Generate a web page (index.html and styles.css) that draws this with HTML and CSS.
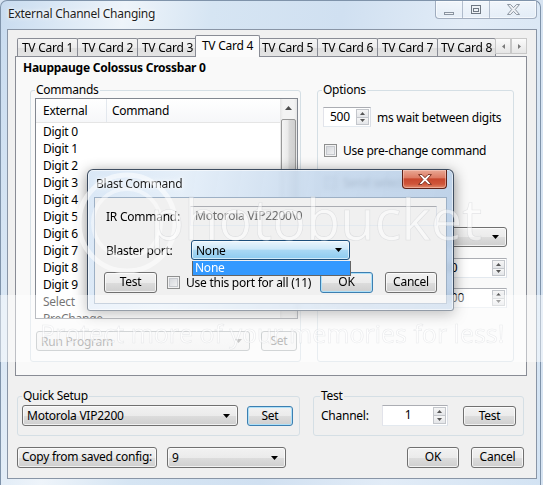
FILE: index.html
```html
<!DOCTYPE html>
<html>
<head>
<meta charset="utf-8">
<title>External Channel Changing</title>
<link rel="stylesheet" href="styles.css">
</head>
<body>
<div class="window">
  <div class="titlebar">
    <span class="title">External Channel Changing</span>
    <div class="capbtns">
      <span class="cap cap-min"><svg width="12" height="12" viewBox="0 0 12 12"><rect x="1.5" y="8.5" width="9" height="2" fill="#eef2f6" stroke="#8a94a0"/></svg></span>
      <span class="cap cap-max"><svg width="12" height="12" viewBox="0 0 12 12"><rect x="1.5" y="1.5" width="9" height="8" fill="#eef2f6" stroke="#6f7883"/><rect x="3.5" y="4.5" width="5" height="3" fill="none" stroke="#6f7883"/></svg></span>
      <span class="cap cap-close"><svg width="13" height="11" viewBox="0 0 13 11"><polygon points="0.5,0.5 3.5,0.5 6.5,3.6 9.5,0.5 12.5,0.5 8.3,5.5 12.5,10.5 9.5,10.5 6.5,7.4 3.5,10.5 0.5,10.5 4.7,5.5" fill="#eef1f5" stroke="#838d99" stroke-width="0.9"/></svg></span>
    </div>
  </div>

  <div class="client">
    <div class="tabctl">
      <div class="tabstrip">
        <span class="tab">TV Card 1</span>
        <span class="tab">TV Card 2</span>
        <span class="tab">TV Card 3</span>
        <span class="tab sel">TV Card 4</span>
        <span class="tab">TV Card 5</span>
        <span class="tab">TV Card 6</span>
        <span class="tab">TV Card 7</span>
        <span class="tab last">TV Card 8</span>
        <span class="tabscroll">
          <span class="tsb"><svg width="3" height="5" viewBox="0 0 3 5"><path d="M3 0v5L0 2.5z" fill="#7a7a7a"/></svg></span>
          <span class="tsb"><svg width="3" height="5" viewBox="0 0 3 5"><path d="M0 0v5l3-2.5z" fill="#7a7a7a"/></svg></span>
        </span>
      </div>
      <div class="tabpage">
        <div class="devname">Hauppauge Colossus Crossbar 0</div>
        <div class="cols">
          <fieldset class="group g-commands">
            <legend>Commands</legend>
            <div class="listview">
              <div class="lv-main">
                <div class="lv-header"><span class="col1">External</span><span class="col2">Command</span></div>
                <div class="lv-rows">
                  <div class="lv-row">Digit 0</div>
                  <div class="lv-row">Digit 1</div>
                  <div class="lv-row">Digit 2</div>
                  <div class="lv-row">Digit 3</div>
                  <div class="lv-row">Digit 4</div>
                  <div class="lv-row">Digit 5</div>
                  <div class="lv-row">Digit 6</div>
                  <div class="lv-row">Digit 7</div>
                  <div class="lv-row">Digit 8</div>
                  <div class="lv-row">Digit 9</div>
                  <div class="lv-row">Select</div>
                  <div class="lv-row">PreChange</div>
                </div>
              </div>
              <div class="vscroll">
                <span class="vs-up"><svg width="7" height="4" viewBox="0 0 7 4"><path d="M0 4h7L3.5 0z" fill="#4d4d4d"/></svg></span>
                <span class="vs-thumb"></span>
              </div>
            </div>
            <div class="cmd-row">
              <div class="combo disabled w-run"><span>Run Program</span><svg width="7" height="4" viewBox="0 0 7 4"><path d="M0 0h7L3.5 4z" fill="#9a9a9a"/></svg></div>
              <div class="btn disabled w-set">Set</div>
            </div>
          </fieldset>

          <fieldset class="group g-options">
            <legend>Options</legend>
            <div class="opt-spin-row">
              <div class="spin w-500">
                <span class="spin-val">500</span>
                <span class="spin-btns">
                  <span class="sb"><svg width="5" height="3" viewBox="0 0 5 3"><path d="M0 3h5L2.5 0z" fill="#555"/></svg></span>
                  <span class="sb"><svg width="5" height="3" viewBox="0 0 5 3"><path d="M0 0h5L2.5 3z" fill="#555"/></svg></span>
                </span>
              </div>
              <span class="opt-label">ms wait between digits</span>
            </div>
            <div class="opt-check-row">
              <span class="chk"></span><span class="chk-label">Use pre-change command</span>
            </div>
            <div class="opt-check-row row-2">
              <span class="chk"></span><span class="chk-label">Send select</span>
            </div>
            <div class="opt-ctl-row r-combo">
              <span>Blaster:</span>
              <div class="combo w-opt"><span>None</span><svg width="7" height="4" viewBox="0 0 7 4"><path d="M0 0h7L3.5 4z" fill="#000"/></svg></div>
            </div>
            <div class="opt-ctl-row r-spin1">
              <span>Pause:</span>
              <div class="spin w-opt2">
                <span class="spin-val">1000</span>
                <span class="spin-btns">
                  <span class="sb"><svg width="5" height="3" viewBox="0 0 5 3"><path d="M0 3h5L2.5 0z" fill="#555"/></svg></span>
                  <span class="sb"><svg width="5" height="3" viewBox="0 0 5 3"><path d="M0 0h5L2.5 3z" fill="#555"/></svg></span>
                </span>
              </div>
            </div>
            <div class="opt-ctl-row r-spin2">
              <span>Timeout:</span>
              <div class="spin w-opt2">
                <span class="spin-val">10000</span>
                <span class="spin-btns">
                  <span class="sb"><svg width="5" height="3" viewBox="0 0 5 3"><path d="M0 3h5L2.5 0z" fill="#555"/></svg></span>
                  <span class="sb"><svg width="5" height="3" viewBox="0 0 5 3"><path d="M0 0h5L2.5 3z" fill="#555"/></svg></span>
                </span>
              </div>
            </div>
          </fieldset>
        </div>
      </div>
    </div>

    <div class="row2">
      <fieldset class="group g-quick">
        <legend>Quick Setup</legend>
        <div class="qs-row">
          <div class="combo w-qs"><span>Motorola VIP2200</span><svg width="7" height="4" viewBox="0 0 7 4"><path d="M0 0h7L3.5 4z" fill="#000"/></svg></div>
          <div class="btn default w-qset">Set</div>
        </div>
      </fieldset>
      <fieldset class="group g-test">
        <legend>Test</legend>
        <div class="test-row">
          <span class="ch-label">Channel:</span>
          <div class="spin w-ch">
            <span class="spin-val center">1</span>
            <span class="spin-btns">
              <span class="sb"><svg width="5" height="3" viewBox="0 0 5 3"><path d="M0 3h5L2.5 0z" fill="#555"/></svg></span>
              <span class="sb"><svg width="5" height="3" viewBox="0 0 5 3"><path d="M0 0h5L2.5 3z" fill="#555"/></svg></span>
            </span>
          </div>
          <div class="btn w-test">Test</div>
        </div>
      </fieldset>
    </div>

    <div class="row3">
      <div class="btn w-copy">Copy from saved config:</div>
      <div class="combo w-nine"><span>9</span><svg width="7" height="4" viewBox="0 0 7 4"><path d="M0 0h7L3.5 4z" fill="#000"/></svg></div>
      <div class="btn w-ok">OK</div>
      <div class="btn w-cancel">Cancel</div>
    </div>
  </div>

  <div class="dialog">
    <div class="dlg-title">Blast Command</div>
    <span class="dlg-close"><svg width="14" height="11" viewBox="0 0 14 11"><polygon points="0.6,0.6 4,0.6 7,3.7 10,0.6 13.4,0.6 9,5.5 13.4,10.4 10,10.4 7,7.3 4,10.4 0.6,10.4 5,5.5" fill="#fff" stroke="#6e2214" stroke-width="0.9"/></svg></span>
    <div class="dlg-client">
      <div class="dlg-row">
        <span class="dlg-label">IR Command:</span>
        <div class="textbox ro w-ir">Motorola VIP2200\0</div>
      </div>
      <div class="dlg-row r2">
        <span class="dlg-label l2">Blaster port:</span>
        <div class="combo focus w-port"><span>None</span><svg width="7" height="4" viewBox="0 0 7 4"><path d="M0 0h7L3.5 4z" fill="#000"/></svg></div>
      </div>
      <div class="dlg-row3">
        <div class="btn w-dtest">Test</div>
        <span class="chk dchk"></span>
        <span class="chk-label">Use this port for all (11)</span>
        <div class="btn default w-dok">OK</div>
        <div class="btn w-dcancel">Cancel</div>
      </div>
    </div>
    <div class="droplist"><span>None</span></div>
  </div>

  <div class="band"></div>

  <div class="watermark">
    <svg class="wm-logo" width="110" height="110" viewBox="0 0 110 110"><circle cx="55" cy="55" r="48" fill="none" stroke="rgba(255,255,255,0.55)" stroke-width="5"/><circle cx="55" cy="55" r="34" fill="none" stroke="rgba(255,255,255,0.45)" stroke-width="4"/></svg>
    <span class="wm-name">photobucket</span>
    <span class="wm-tag">Protect more of your memories for less!</span>
  </div>
</div>
</body>
</html>
```

FILE: styles.css
```css
* { box-sizing: border-box; }
html, body { margin: 0; padding: 0; }
body {
  width: 543px; height: 485px; overflow: hidden;
  background: #d7e4f2;
  font-family: "Noto Sans", "DejaVu Sans", sans-serif;
  font-size: 12px; letter-spacing: -0.25px; color: #000;
}

/* ---------- main window ---------- */
.window {
  position: relative;
  width: 541px; height: 485px;
  border: 1px solid #7f93aa; border-bottom: none;
  border-radius: 7px 7px 0 0;
  padding: 0 3px 0 6px;
  background: linear-gradient(100deg, #c8dbef 0%, #dbe8f5 10%, #eef4fa 20%, #d6e5f3 34%, #d0e0f1 55%, #e2ecf7 75%, #d3e3f3 100%);
}
.titlebar { height: 28px; display: flex; align-items: flex-start; }
.title { padding: 5px 0 0 1px; line-height: 16px; color: #1f1f1f; text-shadow: 0 0 6px #fff, 0 0 3px #fff; }
.capbtns {
  margin-left: auto; display: flex; height: 18px;
  border: 1px solid rgba(70, 90, 120, 0.45); border-top: none;
  border-radius: 0 0 4px 4px; overflow: hidden;
  background: linear-gradient(rgba(255,255,255,0.55), rgba(255,255,255,0.2));
  box-shadow: inset 0 0 0 1px rgba(255,255,255,0.55);
}
.cap { display: flex; align-items: center; justify-content: center; height: 100%; }
.cap-min { width: 26px; }
.cap-max { width: 27px; border-left: 1px solid rgba(70, 90, 120, 0.35); }
.cap-close { width: 47px; border-left: 1px solid rgba(70, 90, 120, 0.35); }

.client {
  width: 530px; height: 450px;
  background: #f0f0f0;
  border: 1px solid #8995a6;
}

/* ---------- tabs ---------- */
.tabctl { margin: 5px 0 0 7px; width: 512px; }
.tabstrip { height: 21px; display: flex; align-items: flex-end; padding-left: 2px; position: relative; z-index: 1; }
.tab {
  width: 61px; height: 18px; margin-right: -1px;
  border: 1px solid #898c95; border-bottom: none; border-radius: 2px 2px 0 0;
  background: linear-gradient(#f4f4f4 0%, #ececec 50%, #dfdfdf 51%, #e4e4e4 100%);
  text-align: center; line-height: 17px; white-space: nowrap;
}
.tab.sel {
  width: 65px; height: 22px; margin: 0 -3px -1px -2px;
  background: #fbfbfb; position: relative; z-index: 2; line-height: 19px;
}
.tab.last { width: 59px; overflow: hidden; }
.tabscroll { display: flex; margin-bottom: 2px; }
.tsb {
  width: 16px; height: 16px; border: 1px solid #c8c8c8;
  background: linear-gradient(#fbfbfb, #e6e6e6);
  display: flex; align-items: center; justify-content: center;
}
.tabpage {
  height: 320px; border: 1px solid #898c95; background: #f9f9f9;
  padding: 3px 0 0 7px;
}
.devname { font-weight: bold; line-height: 15px; }
.cols { display: flex; margin-top: 8px; }

/* ---------- group boxes ---------- */
.group {
  margin: 0; padding: 0; min-width: 0;
  border: 1px solid #d5dfe5; border-radius: 3px;
}
.group legend { padding: 0 1px; margin-left: 4px; line-height: 14px; font-size: 12px; }
.g-commands { margin-left: 7px; width: 271px; height: 279px; }
.g-options { margin-left: 16px; width: 197px; height: 279px; }

/* ---------- list view ---------- */
.listview {
  margin: 1px 0 0 4px; width: 263px; height: 221px;
  border: 1px solid #828790; background: #fff; display: flex; overflow: hidden;
}
.lv-main { flex: 1; overflow: hidden; }
.lv-header {
  height: 24px; display: flex; border-bottom: 1px solid #e5e5e5;
  background: linear-gradient(#ffffff, #f6f7f9);
}
.col1 { width: 71px; padding-left: 7px; line-height: 23px; border-right: 1px solid #e3e8ee; }
.col2 { padding-left: 5px; line-height: 23px; }
.lv-row { height: 17px; line-height: 17px; padding-left: 7px; }
.vscroll {
  width: 17px;
  background: linear-gradient(90deg, #e6e6e6, #f3f3f3 18%, #f3f3f3 82%, #e6e6e6);
  display: flex; flex-direction: column; align-items: center;
}
.vs-up { height: 17px; display: flex; align-items: center; justify-content: center; }
.vs-thumb {
  width: 15px; height: 150px; margin-top: 3px;
  border: 1px solid #979797; border-radius: 2px;
  background: linear-gradient(90deg, #f4f4f4, #e9e9e9 45%, #d9d9d9 55%, #cfcfcf);
}

.cmd-row { display: flex; margin: 12px 0 0 5px; }
.w-run { width: 214px; }
.w-set { width: 36px; margin-left: 11px; }

/* ---------- controls ---------- */
.btn {
  height: 20px; border: 1px solid #707070; border-radius: 3px;
  background: linear-gradient(#f2f2f2 0%, #ebebeb 50%, #dddddd 51%, #cfcfcf 100%);
  box-shadow: inset 0 0 0 1px rgba(255,255,255,0.7);
  text-align: center; line-height: 18px; white-space: nowrap;
}
.btn.default { border-color: #3c7fb1; box-shadow: inset 0 0 0 1px #aee0f8; }
.btn.disabled { border-color: #adb2b5; background: #f4f4f4; color: #838383; box-shadow: none; }

.combo {
  height: 20px; border: 1px solid #707070; border-radius: 3px;
  background: linear-gradient(#f2f2f2 0%, #ebebeb 50%, #dddddd 51%, #cfcfcf 100%);
  box-shadow: inset 0 0 0 1px rgba(255,255,255,0.7);
  display: flex; align-items: center; justify-content: space-between;
  padding: 0 7px 0 4px; white-space: nowrap;
}
.combo.disabled {
  border-color: #adb2b5; color: #838383; box-shadow: none;
  background: linear-gradient(#f6f6f6, #efefef);
}
.combo.focus {
  border-color: #1d4f7c;
  background: linear-gradient(#eaf5fd 0%, #cde8f9 45%, #a9d8f4 52%, #8dcbf0 100%);
  box-shadow: inset 0 0 0 1px rgba(255,255,255,0.6);
}

.textbox {
  height: 20px; border: 1px solid; border-color: #abadb3 #dbdfe6 #e3e9ef #e2e3ea;
  background: #fff; padding-left: 4px; line-height: 18px; white-space: nowrap;
}
.textbox.ro { background: #f0f0f0; color: #6d6d6d; }

.spin {
  height: 20px; display: flex; background: #fff;
  border: 1px solid; border-color: #abadb3 #dbdfe6 #e3e9ef #e2e3ea;
}
.spin-val { flex: 1; padding-left: 6px; line-height: 18px; }
.spin-val.center { text-align: center; padding-left: 0; }
.spin-btns { width: 13px; margin: 1px 1px 1px 0; display: flex; flex-direction: column; }
.sb {
  flex: 1; display: flex; align-items: center; justify-content: center;
  border: 1px solid #c3c6cb; background: linear-gradient(#f6f6f6, #e4e6e9);
}
.sb + .sb { border-top: none; }

.chk {
  width: 13px; height: 13px; flex: none;
  border: 1px solid #8e8f8f;
  background: linear-gradient(135deg, #cfd2d7, #f7f7f7);
  box-shadow: inset 0 0 0 1px #f2f2f2, inset 0 0 0 2px #c7cacf;
}
.chk-label { margin-left: 6px; white-space: nowrap; }

/* ---------- options group ---------- */
.opt-spin-row { display: flex; align-items: center; margin: 10px 0 0 5px; }
.w-500 { width: 48px; }
.opt-label { margin-left: 6px; }
.opt-check-row { display: flex; align-items: center; height: 14px; margin: 16px 0 0 6px; }
.opt-check-row.row-2 { margin-top: 18px; }
.opt-ctl-row { display: flex; align-items: center; justify-content: space-between; padding: 0 6px 0 6px; }
.r-combo { margin-top: 38px; }
.r-spin1 { margin-top: 11px; }
.r-spin2 { margin-top: 10px; }
.w-opt { width: 95px; }
.w-opt2 { width: 83px; }

/* ---------- bottom ---------- */
.row2 { display: flex; margin: 13px 0 0 9px; }
.g-quick { width: 283px; height: 47px; }
.g-test { width: 211px; height: 47px; margin-left: 13px; }
.g-test legend { margin-left: 6px; }
.qs-row { display: flex; align-items: center; margin: 2px 0 0 4px; }
.w-qs { width: 216px; height: 21px; }
.w-qset { width: 46px; margin-left: 9px; }
.test-row { display: flex; align-items: center; margin-top: 2px; padding-left: 7px; }
.ch-label { width: 61px; }
.w-ch { width: 66px; height: 21px; }
.w-test { width: 53px; margin-left: 15px; }

.row3 { display: flex; margin-top: 11px; padding: 0 12px 0 9px; }
.row3 .btn, .row3 .combo { height: 21px; }
.w-copy { width: 140px; }
.w-nine { width: 119px; margin-left: 10px; }
.w-ok { width: 52px; margin-left: auto; }
.w-cancel { width: 53px; margin-left: 12px; }

/* ---------- Blast Command dialog ---------- */
.dialog {
  position: absolute; left: 86px; top: 168px;
  width: 367px; height: 142px;
  border: 1px solid rgba(25, 40, 60, 0.8); border-radius: 6px 6px 3px 3px;
  padding: 0 6px;
  background: linear-gradient(100deg, rgba(214,229,245,0.9) 0%, rgba(226,237,248,0.9) 25%, rgba(196,215,236,0.88) 60%, rgba(182,204,229,0.9) 100%);
  backdrop-filter: blur(2px);
  box-shadow: 0 3px 14px rgba(0,0,0,0.45), inset 0 0 0 1px rgba(255,255,255,0.55);
}
.dlg-title { height: 27px; line-height: 27px; padding-left: 2px; color: #1e1e1e; text-shadow: 0 0 6px #fff, 0 0 3px #fff; }
.dlg-close {
  position: absolute; right: 6px; top: 0;
  width: 45px; height: 19px;
  border: 1px solid #5e2219; border-top: none; border-radius: 0 0 4px 4px;
  background: linear-gradient(#e9a895 0%, #dd7c65 42%, #c8472e 50%, #cf553a 78%, #e08a6c 100%);
  box-shadow: inset 0 0 0 1px rgba(255,220,210,0.45);
  display: flex; align-items: center; justify-content: center;
}
.dlg-client { height: 107px; border: 1px solid #9db0c5; background: #f0f0f0; }
.dlg-row { display: flex; align-items: center; margin-top: 8px; padding-left: 11px; }
.dlg-row.r2 { margin-top: 14px; }
.dlg-label { width: 84px; }
.dlg-label.l2 { width: 85px; }
.w-ir { width: 247px; }
.w-port { width: 159px; }
.dlg-row3 { display: flex; align-items: center; margin-top: 12px; padding: 0 9px; }
.dlg-row3 .btn { height: 21px; }
.w-dtest { width: 53px; }
.dchk { margin-left: 10px; }
.w-dok { width: 53px; margin-left: auto; }
.w-dcancel { width: 52px; margin-left: 12px; }
.droplist {
  position: absolute; left: 104px; top: 91px;
  width: 159px; height: 15px;
  border: 1px solid #646464; border-top: none;
  background: #3399ff; color: #fff;
  padding-left: 2px; line-height: 13px;
}

/* ---------- photo host watermark ---------- */
.band {
  position: absolute; left: -1px; top: 294px;
  width: 543px; height: 67px;
  background: rgba(255, 255, 255, 0.45);
}
.watermark { position: absolute; left: -1px; top: -1px; width: 543px; height: 485px; pointer-events: none; }
.wm-logo { position: absolute; left: 72px; top: 168px; }
.wm-name {
  position: absolute; left: 150px; top: 180px;
  font-family: "Open Sans", sans-serif; font-size: 56px; letter-spacing: 0;
  color: rgba(255, 255, 255, 0.5);
  -webkit-text-stroke: 0.6px rgba(120, 130, 140, 0.18);
}
.wm-tag {
  position: absolute; left: 40px; top: 316px;
  font-family: "Open Sans", sans-serif; font-size: 25px; letter-spacing: 0;
  color: rgba(255, 255, 255, 0.6);
  -webkit-text-stroke: 0.6px rgba(120, 130, 140, 0.15);
  white-space: nowrap;
}
```
